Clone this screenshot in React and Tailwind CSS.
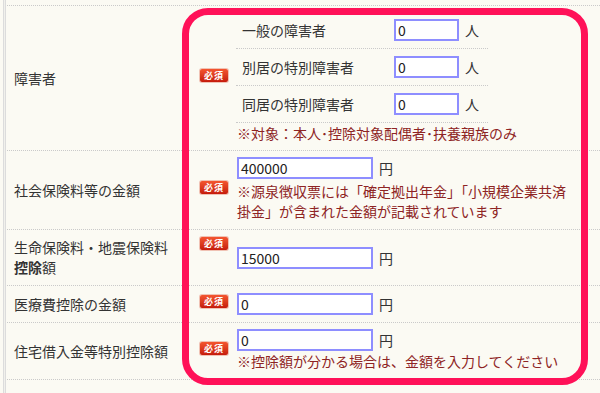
import React from "react";

const Badge = ({ className = "" }) => (
  <span
    className={`inline-flex shrink-0 items-center justify-center w-[28px] h-[13px] rounded-[2px] bg-linear-to-b from-[#f4552f] to-[#c51a0b] text-white text-[9px] font-bold leading-none tracking-[1px] shadow-[0_0_0_1px_#f0c2b4] ${className}`}
  >
    必須
  </span>
);

const Field = ({ w, children }) => (
  <div
    className={`${w} h-[22px] shrink-0 border-2 border-[#8e8eff] bg-white pl-[2px] text-[14px] leading-[18px] text-[#222]`}
  >
    {children}
  </div>
);

const rowCls = "flex border-b border-dotted border-[#cacaca]";
const note = "text-[#8e2424] leading-[20px] whitespace-nowrap";

export default function App() {
  return (
    <div className="relative w-[600px] h-[393px] overflow-hidden bg-[#fbfaf3] font-['Noto_Sans_CJK_JP','Noto_Sans',sans-serif] text-[14px] text-[#333]">
      <div className="flex h-full">
        <div className="ml-[3px] w-[3px] h-full border-x border-[#dcdcdc] bg-[#f1f1ec] shrink-0" />
        <div className="ml-[1px] flex-1 flex flex-col">
          <div className="h-[6px] border-b border-dotted border-[#cacaca]" />

          {/* 障害者 */}
          <div className={rowCls}>
            <div className="w-[229px] shrink-0 flex items-center pl-[7px] pr-[8px]">
              <div className="flex-1 leading-[20px]">障害者</div>
              <Badge className="-mt-[6px]" />
            </div>
            <div className="flex-1 pt-[6px] pb-[7px]">
              <div className="w-[252px]">
                {["一般の障害者", "別居の特別障害者", "同居の特別障害者"].map((t) => (
                  <div
                    key={t}
                    className="flex items-center py-[7px] border-b border-dotted border-[#cacaca]"
                  >
                    <div className="w-[158px] pl-[6px] leading-[20px]">{t}</div>
                    <Field w="w-[65px]">0</Field>
                    <span className="ml-[6px] leading-[20px]">人</span>
                  </div>
                ))}
              </div>
              <div className={`${note} pl-[1px]`}>※対象：本人･控除対象配偶者･扶養親族のみ</div>
            </div>
          </div>

          {/* 社会保険料等の金額 */}
          <div className={rowCls}>
            <div className="w-[229px] shrink-0 flex items-center pl-[7px] pr-[8px]">
              <div className="flex-1 leading-[20px]">社会保険料等の金額</div>
              <Badge className="-mt-[6px]" />
            </div>
            <div className="flex-1 pl-[1px] pt-[6px] pb-[8px]">
              <div className="flex items-center">
                <Field w="w-[136px]">400000</Field>
                <span className="ml-[6px] leading-[20px]">円</span>
              </div>
              <div className={`${note} mt-[2px]`}>
                ※源泉徴収票には「確定拠出年金」「小規模企業共済
                <br />
                掛金」が含まれた金額が記載されています
              </div>
            </div>
          </div>

          {/* 生命保険料 */}
          <div className={rowCls}>
            <div className="w-[229px] shrink-0 flex items-center pl-[7px] pr-[8px] pt-[7px] pb-[8px]">
              <div className="flex-1 leading-[20px]">
                生命保険料・地震保険料
                <br />
                <span className="font-bold">控除</span>額
              </div>
              <Badge className="self-start" />
            </div>
            <div className="flex-1 pl-[1px] flex items-center">
              <Field w="w-[136px]">15000</Field>
              <span className="ml-[6px] leading-[20px]">円</span>
            </div>
          </div>

          {/* 医療費控除の金額 */}
          <div className={rowCls}>
            <div className="w-[229px] shrink-0 flex items-center pl-[7px] pr-[8px]">
              <div className="flex-1 leading-[20px]">医療費控除の金額</div>
              <Badge className="-mt-[6px]" />
            </div>
            <div className="flex-1 pl-[1px] py-[7px] flex items-center">
              <Field w="w-[136px]">0</Field>
              <span className="ml-[6px] leading-[20px]">円</span>
            </div>
          </div>

          {/* 住宅借入金等特別控除額 */}
          <div className={rowCls}>
            <div className="w-[229px] shrink-0 flex items-center pl-[7px] pr-[8px]">
              <div className="flex-1 leading-[20px]">住宅借入金等特別控除額</div>
              <Badge className="-mt-[6px]" />
            </div>
            <div className="flex-1 pl-[1px] pt-[6px] pb-[8px]">
              <div className="flex items-center">
                <Field w="w-[136px]">0</Field>
                <span className="ml-[6px] leading-[20px]">円</span>
              </div>
              <div className={note}>※控除額が分かる場合は、金額を入力してください</div>
            </div>
          </div>
        </div>
      </div>

      <div className="pointer-events-none absolute left-[182px] top-[8px] w-[406px] h-[377px] border-[7px] border-[#ff1158] rounded-[26px]" />
    </div>
  );
}
